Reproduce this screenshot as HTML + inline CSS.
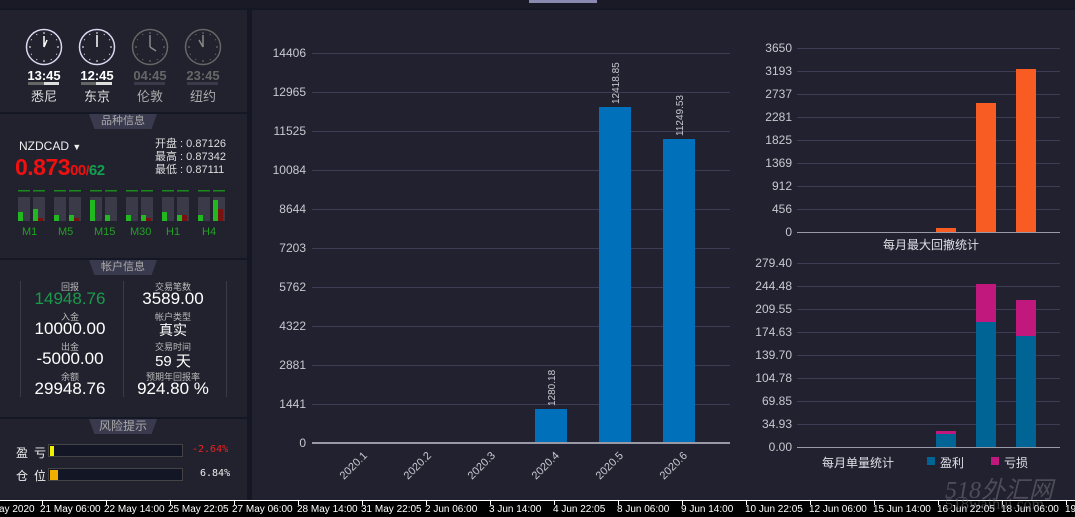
<!DOCTYPE html>
<html><head><meta charset="utf-8"><style>
*{margin:0;padding:0;box-sizing:border-box}
body{width:1075px;height:517px;background:#22212f;position:relative;overflow:hidden;font-family:"Liberation Sans","Noto Sans CJK SC",sans-serif;color:#ddd}
.a{position:absolute}
.lbl{position:absolute;font-family:"Liberation Sans",sans-serif;font-size:12px;color:#c8c8d0;text-align:right}
.g{position:absolute;height:1px;background:#3f3d55}
.tab{position:absolute;height:15px;background:#3a3a4e;color:#aaa;font-size:11px;text-align:center;line-height:15px;clip-path:polygon(0 0,100% 0,92% 100%,8% 100%)}
.k{position:absolute;font-size:9px;color:#bbb;text-align:center;width:100px}
.v{position:absolute;font-size:17px;color:#fff;text-align:center;width:100px}
.tx{position:absolute;top:504px;font-size:10px;color:#fff;white-space:nowrap}
.tk{position:absolute;top:501px;width:1px;height:4px;background:#fff}
</style></head><body>
<div class="a" style="left:0;top:0;width:1075px;height:8px;background:#1a1a26"></div>
<div class="a" style="top:0;width:68px;height:3px;background:#8a8ab0;left:529px"></div>
<div class="a" style="left:0;top:8px;width:1075px;height:2px;background:#141824"></div>
<!-- left panel -->
<div class="a" style="left:0;top:10px;width:247px;height:491px;background:#22222f"></div>
<div class="a" style="left:247px;top:10px;width:5px;height:491px;background:#141824"></div>
<div class="a" style="left:0;top:112px;width:247px;height:2px;background:#141824"></div>
<div class="a" style="left:0;top:258px;width:247px;height:2px;background:#141824"></div>
<div class="a" style="left:0;top:417px;width:247px;height:2px;background:#141824"></div>

<svg class="a" style="left:0;top:0" width="247" height="110">
<defs><g id="tk" stroke-width="1.2"><path d="M0 -15 V-13 M0 13 V15 M-15 0 H-13 M13 0 H15 M7.5 -13 l-.5 .9 M-7.5 -13 l.5 .9 M7.5 13 l-.5 -.9 M-7.5 13 l.5 -.9 M13 7.5 l-.9 -.5 M-13 7.5 l.9 -.5 M13 -7.5 l-.9 .5 M-13 -7.5 l.9 .5"/></g></defs>
<g fill="none" stroke-width="1.5">
<circle cx="44" cy="47" r="17.5" stroke="#d8d8f0"/>
<circle cx="97" cy="47" r="17.5" stroke="#d8d8f0"/>
<circle cx="150" cy="47" r="17.5" stroke="#666"/>
<circle cx="203" cy="47" r="17.5" stroke="#666"/>
<use href="#tk" x="44" y="47" stroke="#ccc"/><use href="#tk" x="97" y="47" stroke="#ccc"/>
<use href="#tk" x="150" y="47" stroke="#666"/><use href="#tk" x="203" y="47" stroke="#666"/>
<path d="M44 47 L44 36 M44 47 L47 40" stroke="#fff"/>
<path d="M97 47 L97 35" stroke="#fff"/>
<path d="M150 47 L150 35 M150 47 L156 51" stroke="#888"/>
<path d="M203 47 L203 35 M203 47 L199 40" stroke="#888"/>
</g>
<rect x="28" y="82" width="31" height="3" fill="#666"/><rect x="44" y="82" width="15" height="3" fill="#ddd"/>
<rect x="81" y="82" width="31" height="3" fill="#666"/><rect x="96" y="82" width="16" height="3" fill="#ddd"/>
<rect x="134" y="82" width="31" height="3" fill="#3a3a4a"/>
<rect x="187" y="82" width="31" height="3" fill="#3a3a4a"/>
</svg>
<div class="a" style="left:24px;top:68px;font-size:13px;font-weight:bold;color:#fff;width:40px;text-align:center">13:45</div>
<div class="a" style="left:77px;top:68px;font-size:13px;font-weight:bold;color:#fff;width:40px;text-align:center">12:45</div>
<div class="a" style="left:130px;top:68px;font-size:13px;font-weight:bold;color:#666;width:40px;text-align:center">04:45</div>
<div class="a" style="left:183px;top:68px;font-size:13px;font-weight:bold;color:#666;width:40px;text-align:center">23:45</div>
<div class="a" style="left:24px;top:86px;font-size:13px;color:#ddd;width:40px;text-align:center">悉尼</div>
<div class="a" style="left:77px;top:86px;font-size:13px;color:#ddd;width:40px;text-align:center">东京</div>
<div class="a" style="left:130px;top:86px;font-size:13px;color:#aaa;width:40px;text-align:center">伦敦</div>
<div class="a" style="left:183px;top:86px;font-size:13px;color:#aaa;width:40px;text-align:center">纽约</div>

<div class="tab" style="left:89px;top:114px;width:68px">品种信息</div>
<div class="a" style="left:19px;top:139px;font-size:12px;color:#eee">NZDCAD <span style="font-size:9px">▼</span></div>
<div class="a" style="left:15px;top:154px;font-size:23px;font-weight:bold;color:#f01010;letter-spacing:-0.5px">0.873<span style="font-size:15px">00</span><span style="font-size:13px">/</span><span style="font-size:15px;color:#10a050">62</span></div>
<div class="a" style="left:155px;top:138px;font-size:11px;color:#ddd;line-height:13px">开盘 : 0.87126<br>最高 : 0.87342<br>最低 : 0.87111</div>
<svg class="a" style="left:0;top:185px" width="247" height="40">
<g fill="#1a8a1a"><rect x="18" y="5" width="12" height="1.5"/><rect x="33" y="5" width="12" height="1.5"/>
<rect x="54" y="5" width="12" height="1.5"/><rect x="69" y="5" width="12" height="1.5"/>
<rect x="90" y="5" width="12" height="1.5"/><rect x="105" y="5" width="12" height="1.5"/>
<rect x="126" y="5" width="12" height="1.5"/><rect x="141" y="5" width="12" height="1.5"/>
<rect x="162" y="5" width="12" height="1.5"/><rect x="177" y="5" width="12" height="1.5"/>
<rect x="198" y="5" width="12" height="1.5"/><rect x="213" y="5" width="12" height="1.5"/></g>
<g fill="#3a3a48">
<rect x="18" y="12" width="12" height="24"/><rect x="33" y="12" width="12" height="24"/>
<rect x="54" y="12" width="12" height="24"/><rect x="69" y="12" width="12" height="24"/>
<rect x="90" y="12" width="12" height="24"/><rect x="105" y="12" width="12" height="24"/>
<rect x="126" y="12" width="12" height="24"/><rect x="141" y="12" width="12" height="24"/>
<rect x="162" y="12" width="12" height="24"/><rect x="177" y="12" width="12" height="24"/>
<rect x="198" y="12" width="12" height="24"/><rect x="213" y="12" width="12" height="24"/></g>
<g fill="#22b822">
<rect x="18" y="27" width="5" height="9"/><rect x="33" y="24" width="5" height="12"/>
<rect x="54" y="30" width="5" height="6"/><rect x="69" y="30" width="5" height="6"/>
<rect x="90" y="15" width="5" height="21"/><rect x="105" y="30" width="5" height="6"/>
<rect x="126" y="30" width="5" height="6"/><rect x="141" y="30" width="5" height="6"/>
<rect x="162" y="27" width="5" height="9"/><rect x="177" y="30" width="5" height="6"/>
<rect x="198" y="30" width="5" height="6"/><rect x="213" y="15" width="5" height="21"/></g>
<g fill="#7a1010"><rect x="38" y="33" width="5" height="3"/><rect x="74" y="33" width="5" height="3"/><rect x="146" y="33" width="5" height="3"/><rect x="182" y="30" width="5" height="6"/><rect x="218" y="24" width="5" height="12"/></g>
</svg>
<div class="a" style="left:0;top:226px;width:247px;font-size:11px;color:#22a022">
<span class="a" style="left:22px">M1</span><span class="a" style="left:58px">M5</span><span class="a" style="left:94px">M15</span><span class="a" style="left:130px">M30</span><span class="a" style="left:166px">H1</span><span class="a" style="left:202px">H4</span></div>

<div class="tab" style="left:89px;top:260px;width:68px">帐户信息</div>
<div class="a" style="left:20px;top:281px;width:1px;height:116px;background:#3a3a48"></div>
<div class="a" style="left:123px;top:281px;width:1px;height:116px;background:#3a3a48"></div>
<div class="a" style="left:226px;top:281px;width:1px;height:116px;background:#3a3a48"></div>
<div class="k" style="left:20px;top:280px">回报</div><div class="v" style="left:20px;top:289px;color:#1a9a4a">14948.76</div>
<div class="k" style="left:20px;top:310px">入金</div><div class="v" style="left:20px;top:319px">10000.00</div>
<div class="k" style="left:20px;top:340px">出金</div><div class="v" style="left:20px;top:349px">-5000.00</div>
<div class="k" style="left:20px;top:370px">余额</div><div class="v" style="left:20px;top:379px">29948.76</div>
<div class="k" style="left:123px;top:280px">交易笔数</div><div class="v" style="left:123px;top:289px">3589.00</div>
<div class="k" style="left:123px;top:310px">帐户类型</div><div class="v" style="left:123px;top:320px;font-size:14px">真实</div>
<div class="k" style="left:123px;top:340px">交易时间</div><div class="v" style="left:123px;top:350px;font-size:15px">59 天</div>
<div class="k" style="left:123px;top:370px">预期年回报率</div><div class="v" style="left:123px;top:379px">924.80 %</div>

<div class="tab" style="left:89px;top:419px;width:68px;font-size:12px">风险提示</div>
<div class="a" style="left:16px;top:444px;font-size:12px;color:#eee;letter-spacing:6px">盈亏</div>
<div class="a" style="left:16px;top:467px;font-size:12px;color:#eee;letter-spacing:6px">仓位</div>
<div class="a" style="left:48px;top:444px;width:135px;height:13px;background:#131624;border:1px solid #444"></div>
<div class="a" style="left:50px;top:446px;width:4px;height:10px;background:#f0f000"></div>
<div class="a" style="left:48px;top:468px;width:135px;height:13px;background:#131624;border:1px solid #444"></div>
<div class="a" style="left:50px;top:470px;width:8px;height:10px;background:#f0b000"></div>
<div class="a" style="left:192px;top:444px;font-size:10px;font-family:'DejaVu Sans Mono',monospace;color:#f02020">-2.64%</div>
<div class="a" style="left:200px;top:468px;font-size:10px;font-family:'DejaVu Sans Mono',monospace;color:#eee">6.84%</div>

<!-- main chart -->
<div class="g" style="left:312px;top:53px;width:418px"></div><div class="lbl" style="left:250px;top:46px;width:56px">14406</div>
<div class="g" style="left:312px;top:92px;width:418px"></div><div class="lbl" style="left:250px;top:85px;width:56px">12965</div>
<div class="g" style="left:312px;top:131px;width:418px"></div><div class="lbl" style="left:250px;top:124px;width:56px">11525</div>
<div class="g" style="left:312px;top:170px;width:418px"></div><div class="lbl" style="left:250px;top:163px;width:56px">10084</div>
<div class="g" style="left:312px;top:209px;width:418px"></div><div class="lbl" style="left:250px;top:202px;width:56px">8644</div>
<div class="g" style="left:312px;top:248px;width:418px"></div><div class="lbl" style="left:250px;top:241px;width:56px">7203</div>
<div class="g" style="left:312px;top:287px;width:418px"></div><div class="lbl" style="left:250px;top:280px;width:56px">5762</div>
<div class="g" style="left:312px;top:326px;width:418px"></div><div class="lbl" style="left:250px;top:319px;width:56px">4322</div>
<div class="g" style="left:312px;top:365px;width:418px"></div><div class="lbl" style="left:250px;top:358px;width:56px">2881</div>
<div class="g" style="left:312px;top:404px;width:418px"></div><div class="lbl" style="left:250px;top:397px;width:56px">1441</div>
<div class="lbl" style="left:250px;top:436px;width:56px">0</div>
<div class="a" style="left:535px;top:409px;width:32px;height:34px;background:#0070bb"></div>
<div class="a" style="left:599px;top:107px;width:32px;height:336px;background:#0070bb"></div>
<div class="a" style="left:663px;top:139px;width:32px;height:304px;background:#0070bb"></div>
<div class="a" style="left:312px;top:442px;width:418px;height:2px;background:#9a9aa6"></div>
<svg class="a" style="left:250px;top:0" width="500" height="500" font-family="Liberation Sans,sans-serif" font-size="10" fill="#c8c8d0">
<text transform="translate(305,406) rotate(-90)">1280.18</text>
<text transform="translate(369,104) rotate(-90)">12418.85</text>
<text transform="translate(433,136) rotate(-90)">11249.53</text>
<g font-size="11">
<text transform="translate(94,480) rotate(-45)">2020.1</text>
<text transform="translate(158,480) rotate(-45)">2020.2</text>
<text transform="translate(222,480) rotate(-45)">2020.3</text>
<text transform="translate(286,480) rotate(-45)">2020.4</text>
<text transform="translate(350,480) rotate(-45)">2020.5</text>
<text transform="translate(414,480) rotate(-45)">2020.6</text></g>
</svg>

<!-- right top -->
<div class="g" style="left:797px;top:48px;width:263px"></div><div class="lbl" style="left:750px;top:41px;width:42px">3650</div>
<div class="g" style="left:797px;top:71px;width:263px"></div><div class="lbl" style="left:750px;top:64px;width:42px">3193</div>
<div class="g" style="left:797px;top:94px;width:263px"></div><div class="lbl" style="left:750px;top:87px;width:42px">2737</div>
<div class="g" style="left:797px;top:117px;width:263px"></div><div class="lbl" style="left:750px;top:110px;width:42px">2281</div>
<div class="g" style="left:797px;top:140px;width:263px"></div><div class="lbl" style="left:750px;top:133px;width:42px">1825</div>
<div class="g" style="left:797px;top:163px;width:263px"></div><div class="lbl" style="left:750px;top:156px;width:42px">1369</div>
<div class="g" style="left:797px;top:186px;width:263px"></div><div class="lbl" style="left:750px;top:179px;width:42px">912</div>
<div class="g" style="left:797px;top:209px;width:263px"></div><div class="lbl" style="left:750px;top:202px;width:42px">456</div>
<div class="lbl" style="left:750px;top:225px;width:42px">0</div>
<div class="a" style="left:936px;top:228px;width:20px;height:4px;background:#f95c22"></div>
<div class="a" style="left:976px;top:103px;width:20px;height:129px;background:#f95c22"></div>
<div class="a" style="left:1016px;top:69px;width:20px;height:163px;background:#f95c22"></div>
<div class="a" style="left:797px;top:232px;width:263px;height:1px;background:#9a9aa6"></div>
<div class="a" style="left:871px;top:236px;width:120px;text-align:center;font-size:12px;color:#e0e0e8">每月最大回撤统计</div>

<!-- right bottom -->
<div class="g" style="left:797px;top:263px;width:263px"></div><div class="lbl" style="left:746px;top:256px;width:46px">279.40</div>
<div class="g" style="left:797px;top:286px;width:263px"></div><div class="lbl" style="left:746px;top:279px;width:46px">244.48</div>
<div class="g" style="left:797px;top:309px;width:263px"></div><div class="lbl" style="left:746px;top:302px;width:46px">209.55</div>
<div class="g" style="left:797px;top:332px;width:263px"></div><div class="lbl" style="left:746px;top:325px;width:46px">174.63</div>
<div class="g" style="left:797px;top:355px;width:263px"></div><div class="lbl" style="left:746px;top:348px;width:46px">139.70</div>
<div class="g" style="left:797px;top:378px;width:263px"></div><div class="lbl" style="left:746px;top:371px;width:46px">104.78</div>
<div class="g" style="left:797px;top:401px;width:263px"></div><div class="lbl" style="left:746px;top:394px;width:46px">69.85</div>
<div class="g" style="left:797px;top:424px;width:263px"></div><div class="lbl" style="left:746px;top:417px;width:46px">34.93</div>
<div class="lbl" style="left:746px;top:440px;width:46px">0.00</div>
<div class="a" style="left:936px;top:431px;width:20px;height:3px;background:#c0187c"></div>
<div class="a" style="left:936px;top:434px;width:20px;height:13px;background:#006494"></div>
<div class="a" style="left:976px;top:284px;width:20px;height:38px;background:#c0187c"></div>
<div class="a" style="left:976px;top:322px;width:20px;height:125px;background:#006494"></div>
<div class="a" style="left:1016px;top:300px;width:20px;height:36px;background:#c0187c"></div>
<div class="a" style="left:1016px;top:336px;width:20px;height:111px;background:#006494"></div>
<div class="a" style="left:797px;top:447px;width:263px;height:1px;background:#9a9aa6"></div>
<div class="a" style="left:822px;top:454px;font-size:12px;color:#e0e0e8;white-space:nowrap">每月单量统计</div>
<div class="a" style="left:927px;top:457px;width:8px;height:8px;background:#006494"></div>
<div class="a" style="left:940px;top:454px;font-size:12px;color:#e0e0e8">盈利</div>
<div class="a" style="left:991px;top:457px;width:8px;height:8px;background:#c0187c"></div>
<div class="a" style="left:1004px;top:454px;font-size:12px;color:#e0e0e8">亏损</div>

<!-- time axis -->
<div class="a" style="left:0;top:500px;width:1075px;height:17px;background:#000"></div>
<div class="a" style="left:0;top:500px;width:1075px;height:1px;background:#fff"></div>
<div class="tx" style="left:-1px">ay 2020</div>
<div class="tk" style="left:42px"></div><div class="tx" style="left:40px">21 May 06:00</div>
<div class="tk" style="left:106px"></div><div class="tx" style="left:104px">22 May 14:00</div>
<div class="tk" style="left:170px"></div><div class="tx" style="left:168px">25 May 22:05</div>
<div class="tk" style="left:234px"></div><div class="tx" style="left:232px">27 May 06:00</div>
<div class="tk" style="left:298px"></div><div class="tx" style="left:297px">28 May 14:00</div>
<div class="tk" style="left:362px"></div><div class="tx" style="left:361px">31 May 22:05</div>
<div class="tk" style="left:426px"></div><div class="tx" style="left:425px">2 Jun 06:00</div>
<div class="tk" style="left:490px"></div><div class="tx" style="left:489px">3 Jun 14:00</div>
<div class="tk" style="left:554px"></div><div class="tx" style="left:553px">4 Jun 22:05</div>
<div class="tk" style="left:618px"></div><div class="tx" style="left:617px">8 Jun 06:00</div>
<div class="tk" style="left:682px"></div><div class="tx" style="left:681px">9 Jun 14:00</div>
<div class="tk" style="left:746px"></div><div class="tx" style="left:745px">10 Jun 22:05</div>
<div class="tk" style="left:810px"></div><div class="tx" style="left:809px">12 Jun 06:00</div>
<div class="tk" style="left:874px"></div><div class="tx" style="left:873px">15 Jun 14:00</div>
<div class="tk" style="left:938px"></div><div class="tx" style="left:937px">16 Jun 22:05</div>
<div class="tk" style="left:1002px"></div><div class="tx" style="left:1001px">18 Jun 06:00</div>
<div class="tk" style="left:1066px"></div><div class="tx" style="left:1065px">19</div>
<div class="a" style="left:945px;top:470px;font-size:24px;font-style:italic;font-family:'Liberation Serif',serif;color:rgba(120,120,130,0.5);white-space:nowrap">518外汇网</div>
<div class="a" style="left:945px;top:496px;font-size:16px;font-family:'Liberation Serif',serif;color:rgba(120,120,130,0.5);white-space:nowrap">518waihui.com</div>
</body></html>
